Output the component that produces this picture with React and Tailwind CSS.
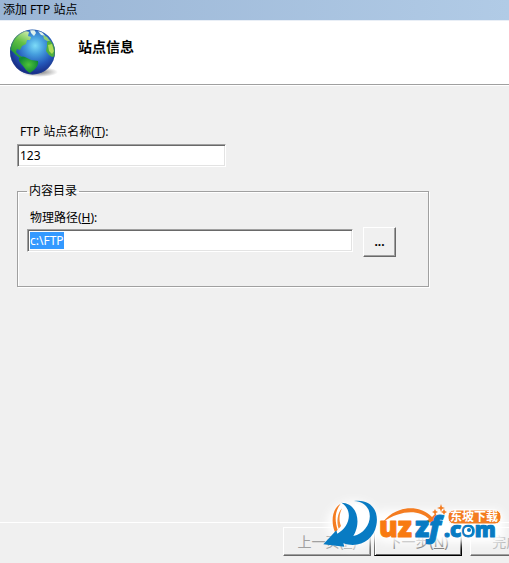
import { useEffect, useRef } from "react";

const sunken =
  "border border-t-[#a0a0a0] border-l-[#a0a0a0] border-r-white border-b-white bg-white shadow-[inset_1px_1px_0_#696969,inset_-1px_-1px_0_#e3e3e3] outline-none h-[23px] px-[2px] text-xs text-black";

const raised =
  "border border-t-white border-l-white border-r-[#696969] border-b-[#696969] bg-[#f0f0f0] shadow-[inset_-1px_-1px_0_#a0a0a0]";

function Globe() {
  return (
    <svg className="h-[52px] w-[52px] shrink-0" viewBox="0 0 52 52" aria-hidden="true">
      <defs>
        <radialGradient id="sea" cx="0.56" cy="0.36" r="0.65">
          <stop offset="0" stopColor="#7ddcf8" />
          <stop offset="0.3" stopColor="#469fde" />
          <stop offset="0.65" stopColor="#2458ba" />
          <stop offset="1" stopColor="#16257d" />
        </radialGradient>
        <linearGradient id="land" x1="0.6" y1="0" x2="0.2" y2="1">
          <stop offset="0" stopColor="#c4e8a0" />
          <stop offset="0.4" stopColor="#62c045" />
          <stop offset="1" stopColor="#159032" />
        </linearGradient>
        <radialGradient id="south">
          <stop offset="0" stopColor="#4fc437" />
          <stop offset="1" stopColor="#138a35" />
        </radialGradient>
        <radialGradient id="ground">
          <stop offset="0" stopColor="#444" stopOpacity="0.7" />
          <stop offset="1" stopColor="#444" stopOpacity="0" />
        </radialGradient>
        <clipPath id="ball">
          <circle cx="24.5" cy="24" r="22.5" />
        </clipPath>
      </defs>
      <ellipse cx="31" cy="44" rx="19" ry="5" fill="url(#ground)" />
      <circle cx="24.5" cy="24" r="22.5" fill="url(#sea)" />
      <g clipPath="url(#ball)">
        <path
          d="M2 21 Q4 8 15 2 L21 4 20 8 23 9 22 12 19 12 18 16 14 18 12 22 9 21 8 24 11 27 14 29 12 30 8 27 5 24Z"
          fill="url(#land)"
        />
        <path d="M11 30 Q15 27 19 30 L23 32 30 33 C31 37 28 40 26 42 L22 45 C18 43 17 40 14 37 L11 33Z" fill="url(#south)" />
        <path d="M39 14 L42 12 48 20 48 28 44 29 41 27 38 23 39 18Z" fill="#4fb03c" />
        <path d="M40 17 L44 16 46 23 44 26 41 23Z" fill="#b0dc58" />
        <path d="M22 2 L26 1 28 5 26 8 23 5Z M30 3 L34 4 37 8 33 7Z" fill="#dff2ee" />
        <path d="M35 7 L39 9 42 13 39 13 36 11Z" fill="#8fcf75" />
      </g>
      <circle cx="24.5" cy="24" r="22" fill="none" stroke="#24499c" strokeOpacity="0.45" />
    </svg>
  );
}

function Watermark() {
  return (
    <svg
      className="pointer-events-none absolute right-0 bottom-0 h-[73px] w-[189px]"
      viewBox="0 0 189 73"
      role="img"
      aria-label="东坡下载 uzzf.com"
    >
      <defs>
        <filter id="glow" x="-20%" y="-30%" width="140%" height="160%">
          <feGaussianBlur stdDeviation="4" />
        </filter>
      </defs>
      <g filter="url(#glow)" fill="#fff">
        <ellipse cx="34" cy="34" rx="27" ry="23" />
        <rect x="56" y="20" width="128" height="33" rx="10" />
      </g>
      <g transform="translate(2 6) scale(0.3333)">
        <path d="M62 18 C100 20 112 75 84 112 L60 125 L45 108 C28 80 38 35 62 18Z" fill="#fff" />
        <path d="M98 22 C142 28 142 100 104 126 L92 120 C112 90 112 50 98 22Z" fill="#fff" />
        <path d="M56 23 C30 38 26 78 39 109 L47 102 C37 72 39 45 56 23Z" fill="#f47c20" />
        <path d="M60 37 C46 52 43 78 50 98 L57 90 C50 72 52 54 60 37Z" fill="#f58a35" />
        <path
          d="M58 20 C104 20 120 78 94 120 C132 112 152 72 140 42 C132 24 117 17 96 15 C146 8 172 44 163 88 C155 132 112 158 64 142 L67 152 L4 145 L43 103 L46 113 C82 94 96 44 58 20Z"
          fill="#087bc3"
        />
        <path d="M96 30 C112 55 113 88 98 117 C126 94 130 50 96 30Z" fill="#fff" />
      </g>
      <path
        d="M63 32 C76 15 100 14 112 27 L116 23 L117 33 L105 32 L109 29 C99 19 80 20 63 32Z"
        fill="#f47c20"
      />
      <g fontFamily="Open Sans, Noto Sans, sans-serif" fontWeight="800" strokeLinejoin="round">
        <g strokeWidth="1" fill="#f87a10" stroke="#f87a10">
          <text x="59" y="47" fontSize="28">uz</text>
        </g>
        <g strokeWidth="1" fill="#087bc3" stroke="#087bc3">
          <text x="95" y="47" fontSize="28">z</text>
          <text x="109" y="47" fontSize="29" fontStyle="italic">f</text>
          <text x="124" y="47" fontSize="21">.com</text>
        </g>
      </g>
      <circle cx="148" cy="41" r="4" fill="#fff" />
      <circle cx="149" cy="40" r="2" fill="#087bc3" />
      <rect x="128" y="20" width="53" height="14" rx="6" fill="#f47c20" stroke="#fff" />
      <text
        x="130"
        y="31"
        fontSize="12"
        fontWeight="700"
        fill="#fff"
        fontFamily="Noto Sans CJK SC, sans-serif"
      >
        东坡下载
      </text>
      <path
        d="M121 14 l1 3 3 1 -3 1 -1 3 -1 -3 -3 -1 3 -1Z M115 19 l1 2 2 1 -2 1 -1 2 -1 -2 -2 -1 2 -1Z M124 19 l1 2 2 1 -2 1 -1 2 -1 -2 -2 -1 2 -1Z"
        fill="#f47c20"
      />
    </svg>
  );
}

export default function App() {
  const pathRef = useRef(null);

  useEffect(() => {
    pathRef.current.focus();
    pathRef.current.select();
  }, []);

  return (
    <div className="relative flex min-h-screen flex-col overflow-hidden bg-[#f0f0f0] font-['Noto_Sans','Noto_Sans_CJK_SC',sans-serif] text-xs text-black">
      <div className="flex h-5 items-center bg-linear-to-r from-[#9ab5d5] to-[#b1cbe6] px-[3px]">
        添加 FTP 站点
      </div>
      <header className="flex h-[65px] items-start gap-[18px] border-t border-b border-t-[#e8eef6] border-b-[#a0a0a0] bg-white px-2 pt-[7px] shadow-[0_1px_0_#fff]">
        <Globe />
        <h1 className="pt-[9px] text-sm leading-5 font-bold">站点信息</h1>
      </header>

      <main className="flex flex-1 flex-col items-start px-[17px] pt-[38px]">
        <label htmlFor="site" className="px-[3px] leading-[18px]">
          FTP 站点名称(<u>T</u>):
        </label>
        <input id="site" defaultValue="123" className={`${sunken} mt-[3px] w-[209px]`} />

        <fieldset className="mt-[14px] h-[106px] w-[412px] max-w-full border border-[#a0a0a0] px-[9px] shadow-[1px_1px_0_#fff,inset_1px_1px_0_#fff]">
          <legend className="px-[2px] leading-[20px]">内容目录</legend>
          <label htmlFor="path" className="block px-[3px] pt-2 leading-[18px]">
            物理路径(<u>H</u>):
          </label>
          <div className="flex items-start gap-[10px]">
            <input
              id="path"
              ref={pathRef}
              defaultValue="c:\FTP"
              className={`${sunken} mt-[2px] min-w-0 flex-1 selection:bg-[#3399ff] selection:text-white`}
            />
            <button type="button" aria-label="浏览" className={`${raised} mr-[23px] h-[30px] w-[33px] font-bold`}>
              ...
            </button>
          </div>
        </fieldset>
      </main>

      <footer className="flex h-[41px] items-start justify-end border-t border-white pt-1">
        <div className="-mr-[49px] flex shrink-0">
          <button type="button" disabled className={`${raised} h-[29px] w-[88px] text-sm text-[#a0a0a0]`}>
            上一页(<u>P</u>)
          </button>
          <button
            type="button"
            className="ml-[3px] h-[29px] w-[88px] border border-t-[#a0a0a0] border-r-black border-b-black border-l-[#696969] bg-[#f0f0f0] text-sm text-[#777] shadow-[inset_1px_1px_0_#fff,inset_-1px_-1px_0_#696969]"
          >
            下一步(<u>N</u>)
          </button>
          <button type="button" disabled className={`${raised} ml-2 h-[29px] w-[88px] text-sm text-[#b5b5b5]`}>
            完成(<u>F</u>)
          </button>
        </div>
      </footer>
      <Watermark />
    </div>
  );
}
